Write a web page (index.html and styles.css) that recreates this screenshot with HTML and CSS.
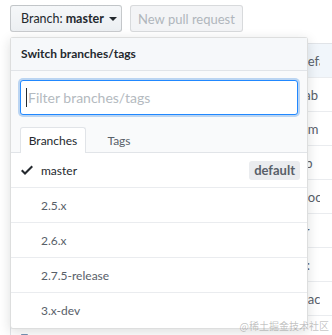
FILE: index.html
```html
<!DOCTYPE html>
<html lang="en">

<head>
  <meta charset="UTF-8">
  <meta name="viewport" content="width=device-width, initial-scale=1.0">
  <title>Switch branches/tags</title>
  <link rel="stylesheet" href="styles.css">
</head>

<body>
  <div class="page">
    <div class="toolbar">
      <button class="btn branch-btn">Branch: <b>master</b> <span class="caret-down"></span></button>
      <button class="btn" disabled>New pull request</button>
    </div>

    <div class="files">
      <div class="file-row tease"><span class="name"></span><span class="msg">Default</span></div>
      <div class="file-row"><span class="name"></span><span class="msg">Tab</span></div>
      <div class="file-row"><span class="name"></span><span class="msg">Nm</span></div>
      <div class="file-row"><span class="name"></span><span class="msg">Fb</span></div>
      <div class="file-row"><span class="name"></span><span class="msg">Doc</span></div>
      <div class="file-row"><span class="name"></span><span class="msg">Fr</span></div>
      <div class="file-row"><span class="name"></span><span class="msg">A:</span></div>
      <div class="file-row"><span class="name"></span><span class="msg">Dac</span></div>
      <div class="file-row">
        <span class="name">
          <svg class="folder" width="14" height="16" viewBox="0 0 14 16"><path d="M13 4H7V3c0-.66-.31-1-1-1H1c-.55 0-1 .45-1 1v10c0 .55.45 1 1 1h12c.55 0 1-.45 1-1V5c0-.55-.45-1-1-1zM6 4H1V3h5v1z"/></svg>
          <a href="#">dubbo-common</a>
        </span>
      </div>
    </div>
  </div>

  <div class="select-menu">
    <div class="menu-header">Switch branches/tags</div>
    <div class="menu-filters">
      <div class="filter-input"><span class="cursor"></span><span class="placeholder">Filter branches/tags</span></div>
      <div class="tabs">
        <span class="tab selected">Branches</span>
        <span class="tab">Tags</span>
      </div>
    </div>
    <div class="menu-list">
      <div class="menu-item current">
        <svg class="check" width="12" height="16" viewBox="0 0 12 16"><path d="M12 5l-8 8-4-4 1.5-1.5L4 10l6.5-6.5L12 5z"/></svg>
        <span class="item-name">master</span>
        <span class="label">default</span>
      </div>
      <div class="menu-item"><span class="item-name">2.5.x</span></div>
      <div class="menu-item"><span class="item-name">2.6.x</span></div>
      <div class="menu-item"><span class="item-name">2.7.5-release</span></div>
      <div class="menu-item"><span class="item-name">3.x-dev</span></div>
    </div>
  </div>

  <div class="watermark">@稀土掘金技术社区</div>
</body>

</html>
```

FILE: styles.css
```css
* {
  box-sizing: border-box;
}

body {
  margin: 0;
  background: #fff;
  font-family: Lato, "Noto Sans", Arial, sans-serif;
  color: #24292e;
  overflow: hidden;
}

.page {
  height: 335px;
  overflow: hidden;
  padding: 5px 0 0 10px;
}

.toolbar {
  display: flex;
  gap: 8px;
  height: 27px;
}

.btn {
  height: 27px;
  padding: 0 10px;
  border: 1px solid rgba(27, 31, 35, 0.2);
  border-radius: 3px;
  background: linear-gradient(#f5f7f9, #eceff2);
  font-family: inherit;
  font-size: 12.5px;
  color: #24292e;
  display: flex;
  align-items: center;
  white-space: nowrap;
}

.branch-btn {
  width: 112px;
}

.branch-btn b {
  font-weight: 700;
  margin-left: 3px;
}

.caret-down {
  display: inline-block;
  margin-left: 5px;
  border-top: 4px solid #24292e;
  border-left: 4px solid transparent;
  border-right: 4px solid transparent;
}

.btn[disabled] {
  width: 113px;
  justify-content: center;
  color: #b0b6bc;
  background: #f3f4f6;
  border-color: rgba(27, 31, 35, 0.12);
  font-size: 13px;
}

.files {
  margin-top: 11px;
  border: 1px solid #e1e4e8;
  border-right: none;
  font-size: 13px;
}

.file-row {
  display: flex;
  height: 34px;
  align-items: center;
  border-top: 1px solid #eaecef;
  color: #586069;
}

.file-row.tease {
  border-top: none;
  background: #f1f6fb;
  height: 33px;
}

.name {
  width: 287px;
  padding-left: 10px;
  display: flex;
  align-items: center;
  gap: 8px;
}

.folder {
  fill: #7593b5;
  margin-top: 14px;
}

.name a {
  color: #0366d6;
  text-decoration: none;
  font-size: 15px;
  margin-top: 14px;
}

.msg {
  width: 22px;
  overflow: hidden;
  white-space: nowrap;
}

.select-menu {
  position: absolute;
  left: 10px;
  top: 37px;
  width: 298px;
  background: #fff;
  border: 1px solid rgba(27, 31, 35, 0.15);
  border-radius: 3px;
  box-shadow: 0 3px 12px rgba(27, 31, 35, 0.15);
  font-size: 12px;
}

.menu-header {
  height: 33px;
  line-height: 32px;
  padding: 0 10px;
  font-weight: 700;
  background: #f6f8fa;
  border-bottom: 1px solid #e1e4e8;
}

.menu-filters {
  background: #f9fafb;
  padding: 9px 9px 0;
  border-bottom: 1px solid #e1e4e8;
}

.filter-input {
  height: 35px;
  border: 1px solid #2188ff;
  border-radius: 3px;
  background: #fff;
  box-shadow: 0 0 0 2px rgba(3, 102, 214, 0.25);
  display: flex;
  align-items: center;
  padding-left: 5px;
  font-size: 14px;
}

.cursor {
  width: 1px;
  height: 19px;
  background: #24292e;
  margin-right: 1px;
}

.placeholder {
  color: #b4bac0;
}

.tabs {
  display: flex;
  margin-top: 12px;
  height: 25px;
}

.tab {
  width: 66px;
  text-align: center;
  line-height: 25px;
  color: #586069;
  border: 1px solid transparent;
  border-bottom: none;
  border-radius: 3px 3px 0 0;
  margin-bottom: -1px;
  height: 26px;
}

.tab.selected {
  background: #fff;
  border-color: #e1e4e8;
  color: #24292e;
}

.menu-item {
  display: flex;
  align-items: center;
  height: 35px;
  padding: 0 7px 0 30px;
  border-bottom: 1px solid #eaecef;
  color: #586069;
}

.menu-item:last-child {
  border-bottom: none;
}

.menu-item.current {
  padding-left: 10px;
  color: #24292e;
}

.check {
  margin-right: 8px;
  fill: #24292e;
}

.item-name {
  flex: 1;
}

.label {
  background: #eaecef;
  border-radius: 3px;
  padding: 1px 5px 2px;
  font-weight: 700;
  color: #586069;
  font-size: 13px;
}

.watermark {
  position: absolute;
  right: 3px;
  bottom: 2px;
  font-size: 10px;
  color: rgba(120, 120, 120, 0.45);
  font-family: "Noto Sans CJK SC", sans-serif;
}
```
